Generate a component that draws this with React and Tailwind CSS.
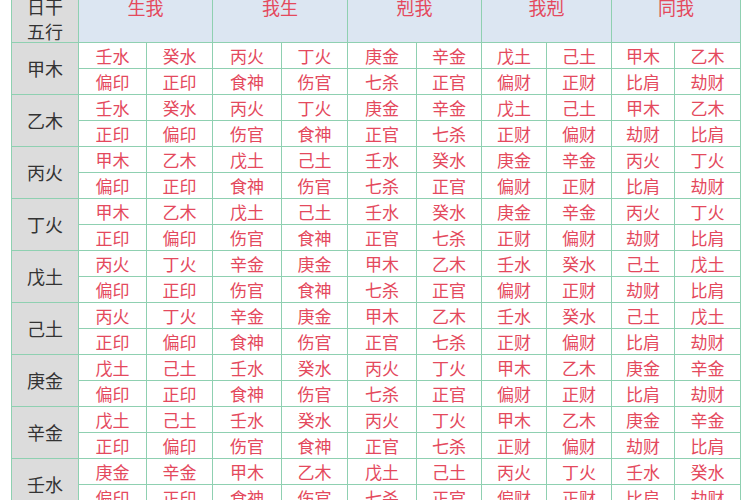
const heads = ["生我", "我生", "剋我", "我剋", "同我"];

const rows = [
  ["甲木", "壬水 癸水 丙火 丁火 庚金 辛金 戊土 己土 甲木 乙木", "偏印 正印 食神 伤官 七杀 正官 偏财 正财 比肩 劫财"],
  ["乙木", "壬水 癸水 丙火 丁火 庚金 辛金 戊土 己土 甲木 乙木", "正印 偏印 伤官 食神 正官 七杀 正财 偏财 劫财 比肩"],
  ["丙火", "甲木 乙木 戊土 己土 壬水 癸水 庚金 辛金 丙火 丁火", "偏印 正印 食神 伤官 七杀 正官 偏财 正财 比肩 劫财"],
  ["丁火", "甲木 乙木 戊土 己土 壬水 癸水 庚金 辛金 丙火 丁火", "正印 偏印 伤官 食神 正官 七杀 正财 偏财 劫财 比肩"],
  ["戊土", "丙火 丁火 辛金 庚金 甲木 乙木 壬水 癸水 己土 戊土", "偏印 正印 伤官 食神 七杀 正官 偏财 正财 劫财 比肩"],
  ["己土", "丙火 丁火 辛金 庚金 甲木 乙木 壬水 癸水 己土 戊土", "正印 偏印 食神 伤官 正官 七杀 正财 偏财 比肩 劫财"],
  ["庚金", "戊土 己土 壬水 癸水 丙火 丁火 甲木 乙木 庚金 辛金", "偏印 正印 食神 伤官 七杀 正官 偏财 正财 比肩 劫财"],
  ["辛金", "戊土 己土 壬水 癸水 丙火 丁火 甲木 乙木 庚金 辛金", "正印 偏印 伤官 食神 正官 七杀 正财 偏财 劫财 比肩"],
  ["壬水", "庚金 辛金 甲木 乙木 戊土 己土 丙火 丁火 壬水 癸水", "偏印 正印 食神 伤官 七杀 正官 偏财 正财 比肩 劫财"],
];

function Cell({ children }) {
  return (
    <div className="bg-white flex items-center justify-center text-[17px] leading-none text-[#e4495d]">
      {children}
    </div>
  );
}

export default function App() {
  return (
    <div
      className="w-[750px] h-[500px] overflow-hidden bg-white pl-[11px]"
      style={{ fontFamily: '"Noto Sans CJK SC", "Noto Sans", sans-serif' }}
    >
      <div className="w-[730px] grid grid-cols-[66px_67px_65px_68px_65px_68px_64px_64px_64px_62px_65px] grid-rows-[42px_repeat(18,25px)] gap-px px-px pb-px bg-[#8fd0b1]">
        <div className="bg-[#dcdcdc] flex flex-col justify-end items-center text-[18px] text-[#333]">
          <div className="leading-[28px]">日干</div>
          <div className="leading-[22px]">五行</div>
        </div>
        {heads.map((h) => (
          <div
            key={h}
            className="col-span-2 bg-[#dce6f2] flex items-start justify-center text-[18px] leading-[14px] text-[#e4495d]"
          >
            {h}
          </div>
        ))}
        {rows.map(([stem, a, b]) => (
          <Row key={stem} stem={stem} a={a.split(" ")} b={b.split(" ")} />
        ))}
      </div>
    </div>
  );
}

function Row({ stem, a, b }) {
  return (
    <>
      <div className="row-span-2 bg-[#dcdcdc] flex items-center justify-center text-[18px] text-[#333]">
        {stem}
      </div>
      {a.map((t, i) => (
        <Cell key={"a" + i}>{t}</Cell>
      ))}
      {b.map((t, i) => (
        <Cell key={"b" + i}>{t}</Cell>
      ))}
    </>
  );
}
